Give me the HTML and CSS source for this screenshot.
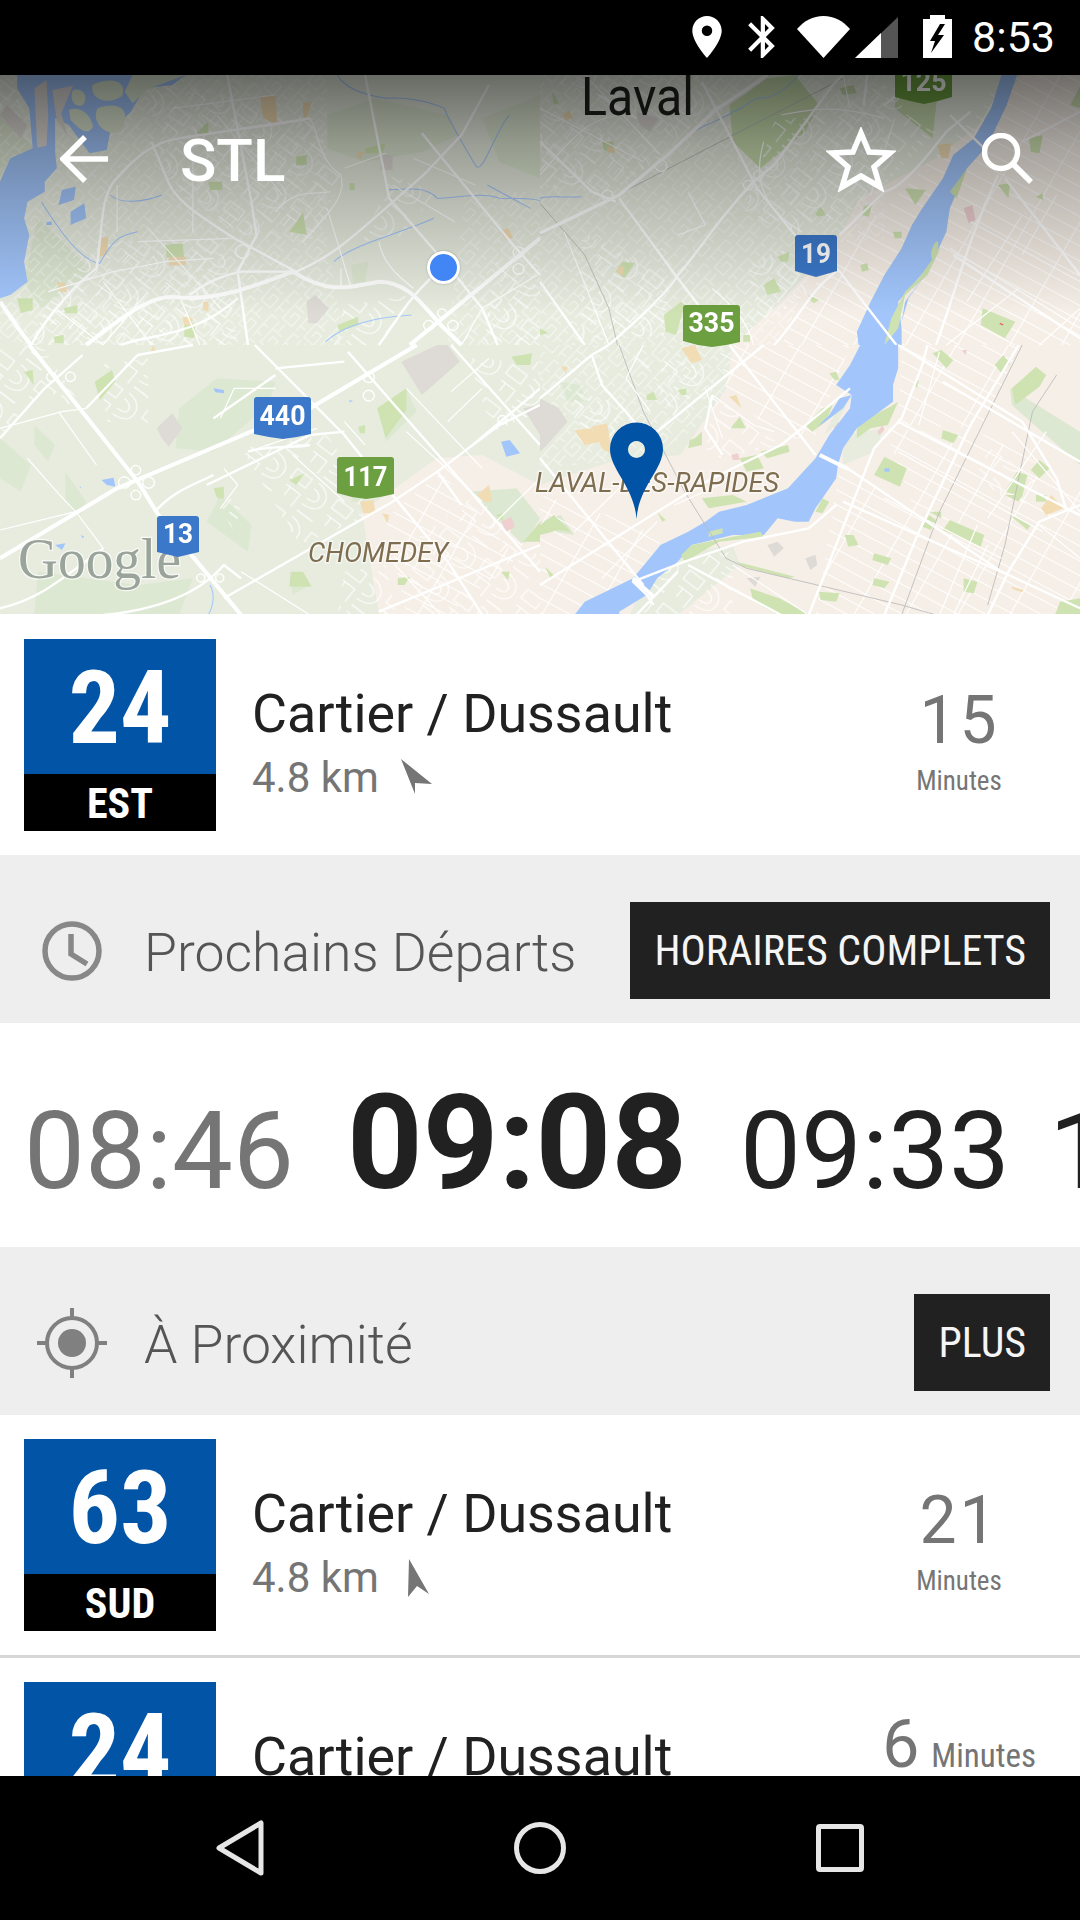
FILE: index.html
```html
<!DOCTYPE html>
<html lang="fr">
<head>
<meta charset="utf-8">
<title>STL</title>
<link rel="stylesheet" href="styles.css">
</head>
<body>
<div class="screen">
  <header class="status">
    <svg class="st-pin" viewBox="5 2 14 20"><path class="w" fill-rule="evenodd" d="M12 2C8.13 2 5 5.13 5 9c0 5.25 7 13 7 13s7-7.75 7-13c0-3.87-3.13-7-7-7zm0 9.5a2.5 2.5 0 0 1 0-5 2.5 2.5 0 0 1 0 5z"/></svg>
    <svg class="st-bt" viewBox="5 2 12.71 20"><path class="w" d="M17.71 7.71L12 2h-1v7.59L6.41 5 5 6.41 10.59 12 5 17.59 6.41 19 11 14.41V22h1l5.71-5.71-4.3-4.29 4.3-4.29zM13 5.83l1.88 1.88L13 9.59V5.83zm1.88 10.46L13 18.17v-3.76l1.88 1.88z"/></svg>
    <svg class="st-wifi" viewBox="0 0 53 42"><path class="w" d="M0 13C7 5 16 0 26.500 0S46 5 53 13L26.500 42Z"/></svg>
    <svg class="st-sig" viewBox="0 0 43 41"><path class="dim" d="M0 41L43 0V41Z"/><path class="w" d="M0 41L26 16V41Z"/></svg>
    <svg class="st-bat" viewBox="0 0 29 43"><path class="w" d="M7 0H22V4H29V43H0V4H7Z"/><path class="k" d="M17 9L7 26H12L8 38L21 20H15L22 9Z"/></svg>
    <span class="clock">8:53</span>
  </header>

  <section class="map">
    <svg class="map-art" viewBox="0 0 1080 539" preserveAspectRatio="none">
      <defs>
        <pattern id="grid" width="132" height="39" patternUnits="userSpaceOnUse" patternTransform="rotate(29)">
          <path class="pat" d="M0 1.500H132M1.500 0V39"/>
        </pattern>
        <pattern id="sub" width="150" height="126" patternUnits="userSpaceOnUse" patternTransform="rotate(38)">
          <path class="pat" d="M9 12H63V45H9ZM84 9C114 9 135 27 135 51S114 87 84 87M84 30C99 30 114 39 114 51S99 66 84 66M12 69H63V114M27 69V99M84 111H141"/>
        </pattern>
        <pattern id="sub2" width="96" height="84" patternUnits="userSpaceOnUse" patternTransform="rotate(-48)">
          <path class="pat" d="M6 6H90M6 6V42H42V22H22M60 6V42M60 24H90M6 60H90V80M24 60V80M54 60V76"/>
        </pattern>
      </defs>
      <g class="map-layer">
        <rect class="land" width="1080" height="539"/>
        <path class="pink" d="M379 540L362 437 437 383 482 380 540 410 610 387 680 380 705 345 733 270 781 227 836 167 860 123 936 83 988 43 1022 0H1080V539Z"/>

        <!-- quadrant NW -->
        <g transform="scale(.3444 .3333)">
          <path class="wood" d="M950 120L1090 70 1300 120 1330 180 1230 230 1060 260 950 220ZM1400 130L1568 60V310L1450 260ZM0 120L100 220 30 250 0 300ZM110 430L270 590 120 700 70 620ZM1020 570L1070 560 1060 620 1025 625Z"/>
          <path class="tex" fill="url(#sub2)" d="M0 0H950V500L1000 810H0ZM1350 350H1568V810H1300Z"/>
          <path fill="url(#sub)" d="M0 0H50L60 100 0 130ZM420 40L540 30 900 130 1000 300 900 500 700 480 490 330ZM300 500L650 490 690 810 90 810 150 650ZM1000 690L1200 660 1100 810 970 810ZM1440 560L1568 640V810L1400 810ZM1140 300L1260 350 1180 480 1050 500Z"/>
          <path class="park" d="M480 510L530 505 535 550 485 548ZM855 450L880 410 890 480 840 470ZM570 175L605 140 605 180ZM605 320L645 320 645 345 610 345ZM860 245L890 240 890 270 860 270ZM980 750L1040 725 1040 750 985 770ZM535 750L565 745 565 790 535 785ZM50 670L95 670 95 705 60 715ZM185 700L225 690 225 715 190 715ZM155 785L185 780 185 805 160 805ZM1060 220L1120 205 1110 235 1060 235ZM1015 325L1030 325 1030 345 1015 345Z"/>
          <path class="sand" d="M755 65L800 60 805 150 765 130ZM880 85L905 80 890 130 880 120ZM290 490L315 485 310 540 290 545ZM490 545L540 545 540 570 490 572ZM165 620L190 625 195 650 175 650ZM1452 470L1475 458 1490 490 1470 495ZM590 680L605 680 605 710 590 705ZM530 725L560 728 555 750 535 750ZM1040 230L1055 230 1050 250 1035 250Z"/>
          <path class="rock" d="M890 680L915 660 955 700 920 745 895 745ZM1105 240L1140 240 1140 285 1105 285ZM0 120L60 190 80 150 20 90ZM0 420L25 470 0 490ZM0 550L25 590 0 610Z"/>
          <path class="water" d="M50 0H540L500 30 420 40 380 110 320 170 310 225 260 235 200 150 160 130 160 230 165 280 130 320 130 350 80 380 70 430 85 480 70 560 80 620 30 660 0 670V320L30 250 95 220 85 100 50 40Z"/>
          <path class="rock" d="M100 40L135 15 140 120 135 212 108 218ZM152 45L212 32 178 115 195 180 165 135Z"/>
          <path class="wood" d="M212 45C245 35 258 70 240 90 215 100 200 70 212 45ZM268 30C320 5 370 15 355 62 320 90 262 80 268 30ZM283 100C350 75 385 110 350 168 315 190 262 145 283 100ZM200 105C228 92 262 112 270 155 252 188 225 155 205 135ZM385 0H540L430 42 385 85 362 50Z"/>
          <path class="water" d="M180 345L220 335 215 375 170 390ZM205 410L245 385 250 430 205 450ZM135 440H150V450H135ZM40 520L60 515 45 560 35 570Z"/>
          <path class="brook" d="M980 0C1000 40 1060 60 1120 70 1180 65 1250 80 1290 100 1300 130 1340 200 1380 270 1400 310 1440 160 1480 120M1125 345C1190 340 1240 335 1270 370 1320 370 1400 350 1450 370 1500 370 1568 370 1568 380M970 560C1020 510 1150 480 1260 430M320 360C350 390 420 380 470 360M945 800C980 770 1040 730 1195 720M1415 330L1540 400M120 380C150 430 230 560 290 565 330 490 350 480 400 470"/>
          <path class="road thin" d="M500 100L800 60M520 190C600 170 780 160 900 130 930 180 920 250 990 300 1000 350 990 380 880 500M630 120L820 360M340 330V470M560 230V470M950 400L1020 640M1000 280L1120 235M400 500L680 490M140 650L330 590 480 560 620 550M300 620L440 810M160 700L300 810M430 460L640 700M430 650L300 810M520 660L580 810M1100 500C1110 560 1150 600 1200 640M1560 600L1400 700 1340 810M990 580V640M800 410C860 340 900 360 960 350M1140 330L1320 440M1200 250L1380 330"/>
          <path class="road" d="M90 810C150 700 230 620 280 580 300 450 290 380 330 320 380 260 440 200 520 190L900 130M440 200L480 300C500 370 560 410 680 490L860 590M660 0L730 380 745 480 690 590 720 810M1060 0L1130 370 1290 560 1400 700 1445 810M1225 175L1490 510 1568 600M860 590C950 550 1000 510 1130 390L1230 300 1340 180 1420 30M550 660C600 620 650 600 700 590L860 590M350 810C420 780 560 790 690 670M1100 810C1150 740 1180 680 1250 610"/>
          <path class="road wide" d="M250 810C350 730 430 665 500 665 600 680 700 650 850 590 950 655 1000 640 1100 620 1180 620 1220 680 1280 750L1340 810M0 680L60 770 90 810M1568 490L1190 810"/>
          <path class="ring" d="M690 515A20 20 0 1 1 689 516M1235 740A15 15 0 1 1 1234 741M1305 740A15 15 0 1 1 1304 741M1275 705A13 13 0 1 1 1274 706M1495 520A16 16 0 1 1 1494 521M1495 570A16 16 0 1 1 1494 571"/>
        </g>

        <!-- quadrant NE -->
        <g transform="translate(540 0) scale(.3444 .3333)">
          <path class="tex" fill="url(#sub2)" d="M0 0H1000V500H820L700 810H0Z"/>
          <path class="park-dark" d="M550 90L660 10 740 0 810 90 770 170 640 280 560 200ZM1040 0H1160L1140 190 1030 100ZM870 40L910 30 920 55 880 60Z"/>
          <path fill="url(#sub)" d="M0 100L350 250 200 350 0 340ZM680 140L1000 80 1150 170 950 380 760 480 590 420ZM120 470L380 600 360 780 120 800ZM600 560L720 520 780 650 640 760ZM860 60L1030 30 1060 120 900 140ZM0 0H470L550 90 420 200 280 130Z"/>
          <path fill="url(#grid)" d="M700 810L860 520 1000 400 1130 260 1280 110 1340 0H1568V810ZM1000 700L1060 640 1050 810Z"/>
          <path class="park" d="M360 720L410 680 420 690 395 780 365 770ZM690 545L725 530 720 560 700 560ZM650 630L680 610 700 650 660 660ZM930 570L950 565 955 585 935 590ZM800 415L815 395 830 420 805 425ZM940 395L965 385 955 425 935 420ZM1285 700L1380 740 1350 790 1280 750ZM1420 190L1460 180 1450 235 1425 230ZM1330 330L1365 325 1360 370ZM1440 365L1460 355 1460 375ZM590 780H610V800H590ZM1025 470H1050V490L1030 490ZM1570 30L1540 90 1568 100ZM780 660L810 675 795 685 785 675ZM240 560L275 565 245 610 220 590ZM180 200L215 200 210 230 185 225ZM35 50L55 85 40 90ZM1060 340L1120 345 1090 390ZM0 760L25 775 0 780Z"/>
          <path class="sand" d="M65 120L85 105 95 130 75 135ZM195 210L220 225 215 235 195 230ZM1155 210L1195 205 1185 250 1165 250ZM225 575L245 575 240 600 225 595Z"/>
          <path class="rose" d="M1230 400L1255 390 1265 435 1245 445Z"/>
          <path class="rock" d="M280 110L345 130 320 170 290 150Z"/>
          <path class="water" d="M1385 0L1355 90 1300 210 1240 280 1190 400 1180 470 1140 560 1090 620 1040 680 1050 760 1050 810H925L920 770 960 680 1000 600 1050 520 1080 450 1110 400 1170 310 1200 240 1260 190 1310 100 1340 0Z"/>
          <path class="bank" d="M1165 515L1125 600 1060 660 1040 760 1000 810 1020 730 1060 650 1100 610ZM1240 280L1190 350 1210 370ZM1150 500C1160 490 1160 530 1140 555 1130 540 1140 510 1150 500Z"/>
          <path class="water" d="M1125 590L1060 680 1050 740 1070 670Z"/>
          <path class="brook" d="M430 180C470 150 540 130 560 110 600 100 620 60 650 70 690 60 720 40 750 0M0 370C40 360 80 370 120 365"/>
          <path class="rail" d="M0 385L130 540 200 700 225 810M0 480L880 10"/>
          <path class="road thin" d="M0 100L300 260M130 0L350 240M0 300C100 180 150 120 250 120M650 200C620 300 640 400 760 470M700 120C800 100 860 90 1000 130M900 100L880 0M1030 130L960 360M430 350L480 450 400 480M70 470L200 810M500 640C520 660 600 720 620 810M1190 520L1568 760M1390 640L1180 810M1568 700L1450 810M1250 440L1568 620M1400 420L1240 680M1500 360L1400 540"/>
          <path class="road" d="M470 20L630 340 740 480 870 590 1035 810M230 370L400 610 460 690M0 620L130 810M200 810C300 720 380 640 400 600 440 560 510 440 620 320L680 270 850 30 880 0M680 810C760 720 780 650 860 590M870 480L1000 350C1050 340 1120 250 1180 170L1250 110M1150 810C1210 640 1240 500 1330 300M1190 120L1290 220M1350 310L1568 600M1200 540L1568 790M1568 110L1400 200M0 200L150 350 220 380M950 0L940 90M1000 90L1110 0M280 130L170 60"/>
          <path class="road wide-2" d="M0 475L230 360 370 240 510 105 660 0"/>
          <path class="ring" d="M340 260A17 17 0 1 1 339 261M185 350A16 16 0 1 1 184 351M625 290A14 14 0 1 1 624 291M595 320A14 14 0 1 1 594 321"/>
          <path class="pink-fine" d="M1335 745L1345 750"/>
        </g>

        <!-- quadrant SW -->
        <g transform="translate(0 270) scale(.3444 .3333)">
          <path class="wood" d="M0 280L90 360 60 440 0 400ZM520 190L630 100 800 110 780 180 620 320 510 310ZM1100 190L1180 130 1210 200 1120 290ZM190 380L250 470 230 520 190 470ZM100 240L160 300 140 350 100 300ZM640 450L730 540 720 620 600 530ZM110 680L400 720 560 700 520 810H100ZM840 680L900 720 850 750ZM1360 440L1500 430 1568 520 1520 600 1420 500ZM1030 420L1060 470 1020 470Z"/>
          <path fill="url(#sub)" d="M0 0H120L260 220 130 130 0 280ZM290 60L430 40 430 240 310 230ZM700 310L950 270 1100 500 870 600ZM600 420L700 480 680 560ZM1000 680L1120 660 1150 810H980ZM1160 620L1380 450 1568 640V810H1240ZM1360 40L1568 50 1568 200 1430 260Z"/>
          <path fill="url(#grid)" d="M1120 520L1280 380 1500 640 1300 810H1180Z"/>
          <path class="park" d="M275 110L325 75 335 110 290 165ZM70 80L95 75 98 120ZM840 405L885 385 860 420ZM620 430L650 425 650 460 630 460ZM1040 245L1060 240 1060 265 1045 265ZM1095 190L1180 130 1180 195 1120 280ZM1485 35L1545 25 1540 60 1500 60ZM845 680L880 680 905 725 840 725ZM1155 700L1190 695 1175 720 1155 720ZM1520 590L1568 530V590ZM1455 680L1480 680 1475 705ZM1440 510L1460 505 1460 530Z"/>
          <path class="sand" d="M1385 450L1420 420 1430 470 1405 470ZM1045 470L1085 465 1090 505 1055 505ZM1110 505L1130 510 1125 535ZM445 0L455 25 435 25Z"/>
          <path class="rose" d="M1455 530L1485 515 1495 545 1470 560Z"/>
          <path class="rock" d="M455 250L500 205 530 250 490 305 470 280ZM1165 50L1270 0H1300L1335 50 1225 150ZM1520 190L1568 180V270Z"/>
          <path class="water" d="M620 130L650 135 650 145 625 142ZM1455 290L1480 285 1510 325 1470 335ZM295 405L330 398 335 425 310 420ZM235 570L245 575 240 580ZM160 600L190 595 180 615ZM1015 165L1025 168 1015 172ZM230 425L235 425 235 430Z"/>
          <path class="brook" d="M610 720C625 750 620 780 605 810"/>
          <path class="road thin" d="M80 340C130 400 190 470 220 500L300 610M220 500L0 555M170 200L280 360M640 220L680 130H800M1000 230L1060 300M0 250L180 200 250 190M1180 260L1400 470M720 320L920 250M850 330L1000 470M650 370L690 420 640 490M1420 550L1568 400M1180 130L1400 370M1420 40L1310 140M1130 640L1280 810M700 680L900 810M1300 230L1400 130"/>
          <path class="road" d="M740 0L1000 270 1100 400 1300 650 1400 810M1010 20L1400 480 1568 680M1310 0L1568 300M0 280L130 130 240 30M250 190L400 30 560 0M650 760L1140 470 1270 380 1450 240 1568 180M300 810C500 790 600 720 650 660L700 700M1568 600L1100 800M620 220L800 90M600 420L900 270 1000 260M800 70L1000 50M450 500C500 440 560 420 620 390M720 320C780 300 850 310 900 300M0 790C120 760 180 700 300 610M1360 310L1500 190 1568 130M1270 380L1340 480"/>
          <path class="road wide" d="M85 0L400 410 460 510 700 810M0 640L340 430 740 255M900 190L1210 0"/>
          <path class="ring" d="M350 400A17 17 0 1 1 349 401M420 400A17 17 0 1 1 419 401M385 365A14 14 0 1 1 384 366M385 440A14 14 0 1 1 384 441M140 85A14 14 0 1 1 139 86M195 85A14 14 0 1 1 194 86M1060 85A16 16 0 1 1 1059 86M1060 140A16 16 0 1 1 1059 141M630 690A12 12 0 1 1 629 691M575 690A12 12 0 1 1 574 691M1450 215A13 13 0 1 1 1449 216"/>
        </g>

        <!-- quadrant SE -->
        <g transform="translate(540 270) scale(.3444 .3333)">
          <path class="land" d="M0 0H560L540 130 480 230 350 320 200 350 0 370ZM340 640L560 600 580 660 400 810H260ZM880 270L1000 250 970 320 880 360Z"/>
          <path class="wood" d="M60 110L115 120 140 170 80 170ZM1365 130L1568 260V360L1370 180ZM0 530L60 510 100 570 40 560 0 570Z"/>
          <path class="tex" fill="url(#sub2)" d="M0 0H560L540 130 480 230 350 320 200 350 0 370Z"/>
          <path fill="url(#sub)" d="M270 30L500 60 400 230 340 120ZM500 150L700 300 480 350ZM340 650L560 620 560 810 300 810ZM100 140L250 180 200 300 100 280ZM1290 300L1440 400 1400 500 1270 400Z"/>
          <path fill="url(#grid)" d="M520 0H900L860 110 800 270 700 290 540 130ZM870 370L1568 760V810H800ZM1050 0H1400L1280 250 1040 240ZM0 450L260 530 350 590 290 690 200 760 100 810H0ZM1000 250L1300 270 1568 430V810H1200Z"/>
          <path class="park" d="M310 150L330 140 340 165 310 165ZM400 135L425 130 425 150 410 150ZM450 280L470 260 470 300 430 310 435 285ZM560 240L580 215 598 250 555 250ZM840 85L860 80 870 105 855 105ZM1140 25L1165 15 1200 45 1180 70ZM1320 60L1345 30 1365 55 1340 85ZM1085 115L1100 105 1095 130ZM1170 255L1215 270 1200 295 1165 280ZM970 390L1000 335 1065 370 1045 425ZM1350 440L1385 380 1415 390 1400 455ZM1425 375L1450 345 1480 370 1450 400ZM1370 130L1440 65 1470 90 1450 125 1380 180ZM1170 555L1190 525 1290 570 1280 605ZM1370 515L1380 515 1425 540 1415 555ZM1110 545L1130 510 1150 525 1135 555ZM1130 500L1165 500 1165 520ZM885 570L910 570 925 600 895 605ZM970 625L1020 640 1010 660 965 645ZM970 700L1015 710 1000 730 965 720ZM1230 700L1270 710 1260 745 1230 740ZM820 460L840 470 820 505 800 500ZM610 730L695 760 785 810H690L620 770ZM810 740L870 745 860 770 815 765ZM1510 770L1568 760V810H1495ZM15 665L40 690 30 700ZM340 500L365 525 355 530ZM1350 450H1400L1390 470ZM570 650L740 695 720 700 590 665ZM470 460L560 450 600 470 490 490ZM770 240L820 190 850 180 830 230 790 260ZM640 320L720 300 725 320 660 340ZM580 340L630 330 650 370 600 380ZM0 540L40 510 90 560 50 555 0 570Z"/>
          <path class="bank" d="M920 250C950 210 1000 200 1040 170L1010 240 960 250 920 280ZM1440 450H1470V470H1440Z"/>
          <path class="sand" d="M410 10L450 0 470 45 440 55ZM100 255L150 250 175 290 130 300ZM150 245L195 235 210 330 180 310ZM550 155L570 150 585 190ZM60 65L80 65 75 85ZM1455 490L1485 450 1520 490 1470 510ZM1370 725L1405 735 1400 742 1372 732Z"/>
          <path class="rose" d="M555 330L575 325 580 345 560 345ZM845 225L870 235 855 250ZM980 260L995 240 1000 255 985 270ZM1225 15L1240 15 1235 30Z"/>
          <path class="rock" d="M0 160L55 190 80 230 20 300 0 320ZM660 600L690 590 708 610 680 635ZM770 640L800 630 805 660 785 675ZM600 700L640 695 625 725Z"/>
          <path class="water" d="M1040 0L1040 70 1025 120 1025 170 960 220 920 250 880 310 865 360 860 400 800 490 780 530 740 530 690 520 650 570 560 570 480 590 440 600 400 650 340 700 310 750 230 800 230 810H100L130 770 230 720 270 700 310 650 350 600 430 560 480 530 520 500 600 480 720 430 800 340 840 270 900 190 905 150 860 120 900 60 930 0Z"/>
          <path class="land" d="M905 150L860 240 825 270 860 200Z"/>
          <path class="bank" d="M490 560L530 550 530 565 490 575ZM440 600L560 575 640 560 650 575 520 590 420 650 410 630Z"/>
          <path class="water" d="M905 150L880 190 835 225 805 245 840 210 870 160Z"/>
          <path class="water" d="M1000 370L1015 370 1015 380 1000 380Z"/>
          <path class="rail" d="M230 0L300 200 420 440 540 640 600 670 1050 780 1150 810M1400 0L1280 250 1160 500 1050 810M1500 90L1430 200 1350 600 1300 780"/>
          <path class="road thin" d="M300 0L250 100 320 200M480 130L530 280M500 150L620 240 680 260M100 560L260 400M180 700L340 530M390 480L520 420M1160 20L1100 240M1470 260L1300 520M1270 540L1160 810M1370 260L1568 500M1040 320L1460 560M1000 460L1340 640M1200 810L1300 600M1450 540L1568 640M560 660L780 810"/>
          <path class="road" d="M0 160L150 30 200 0M150 30L180 120 300 260 350 320M340 260L650 0M550 0L800 330M815 330L900 375M900 375L1340 680 1568 790M420 650L270 710 310 750 330 780M0 720L340 500 500 400 700 300 760 250 900 130M780 810L970 310 1050 220 1110 60 1125 0M1000 810L1100 560 1250 240 1390 0M1040 0L1400 230 1500 400 1530 500M1300 810L1360 680 1450 530 1568 480M1040 230L1568 510M0 340L300 720M500 150L480 250 530 330M420 650L590 590 780 550 860 480M880 470L1360 690M1170 110L1568 350M280 810L400 680M430 660L700 810"/>
          <path class="road wide" d="M812 330L895 372M270 700L330 755"/>
        </g>

        <!-- labels and road signs -->
        <text class="lbl-city" x="581" y="40" textLength="113" lengthAdjust="spacingAndGlyphs">Laval</text>
        <text class="lbl-area" x="535" y="417" textLength="244" lengthAdjust="spacingAndGlyphs">LAVAL-DES-RAPIDES</text>
        <text class="lbl-area" x="308" y="487" textLength="140" lengthAdjust="spacingAndGlyphs">CHOMEDEY</text>
        <text class="lbl-logo" x="18" y="503" textLength="163" lengthAdjust="spacingAndGlyphs">Google</text>

        <g class="sign-blue">
          <path d="M254 325a3 3 0 0 1 3-3h51a3 3 0 0 1 3 3v34l-14 3-14 2-14-2-15-3Z"/>
          <path d="M157 444a3 3 0 0 1 3-3h36a3 3 0 0 1 3 3v33l-21 5-21-5Z"/>
          <path d="M795 163a3 3 0 0 1 3-3h36a3 3 0 0 1 3 3v33l-21 6-21-6Z"/>
        </g>
        <g class="sign-green">
          <path d="M337 385a3 3 0 0 1 3-3h51a3 3 0 0 1 3 3v34l-14 3-14 2-14-2-15-4Z"/>
          <path d="M683 233a3 3 0 0 1 3-3h51a3 3 0 0 1 3 3v34l-14 3-14 2-14-2-15-4Z"/>
          <path d="M895 0h57v22l-14 4-14 3-14-3-15-4Z"/>
        </g>
        <text class="sign" x="282.500" y="350" textLength="46" lengthAdjust="spacingAndGlyphs">440</text>
        <text class="sign" x="365.500" y="411" textLength="44" lengthAdjust="spacingAndGlyphs">117</text>
        <text class="sign" x="178" y="468" textLength="30" lengthAdjust="spacingAndGlyphs">13</text>
        <text class="sign" x="816" y="188" textLength="30" lengthAdjust="spacingAndGlyphs">19</text>
        <text class="sign" x="711.500" y="257" textLength="46" lengthAdjust="spacingAndGlyphs">335</text>
        <text class="sign" x="923.500" y="16" textLength="46" lengthAdjust="spacingAndGlyphs">125</text>
      </g>
      <path class="map-pin" fill-rule="evenodd" d="M636.500 444C634 411 610 395 610 374a26.500 26.500 0 0 1 53 0C663 395 639 411 636.500 444ZM636.500 366a8.500 8.500 0 1 0 .01 0Z"/>
    </svg>
    <div class="map-shade"></div>
    <div class="user-dot"></div>
    <div class="toolbar">
      <svg class="tb-back" viewBox="0 0 48 48"><path class="tb-line" d="M48 24H4M25 2L3 24 25 46"/></svg>
      <span class="tb-title">STL</span>
      <svg class="tb-star" viewBox="0 0 70 65"><path class="tb-line" d="M35 6L43 25 64 26 48 40 54 60 35 49 16 60 22 40 6 26 27 25Z"/></svg>
      <svg class="tb-search" viewBox="0 0 51 51"><circle class="tb-line" cx="19" cy="19" r="16.500"/><path class="tb-line" d="M31 31L49 49"/></svg>
    </div>
  </section>

  <main class="content">
    <article class="stop">
      <div class="badge"><div class="badge-num">24</div><div class="badge-dir">EST</div></div>
      <div class="stop-info">
        <div class="stop-name">Cartier / Dussault</div>
        <div class="stop-dist">4.8 km
          <svg class="arrow" viewBox="0 0 40 40"><path class="arrow-fill" d="M4 0L35 25 18 24 18 35Z"/></svg>
        </div>
      </div>
      <div class="eta"><div class="eta-num">15</div><div class="eta-unit">Minutes</div></div>
    </article>

    <div class="band">
      <svg class="band-icon" viewBox="0 0 60 60"><circle class="ic-line" cx="30" cy="30" r="27"/><path class="ic-line" d="M29 13V33L45 43"/></svg>
      <h2 class="band-title">Prochains Départs</h2>
      <span class="band-btn">HORAIRES COMPLETS</span>
    </div>

    <div class="times">
      <span class="time past">08:46</span>
      <span class="time next">09:08</span>
      <span class="time">09:33</span>
      <span class="time upcoming">10:02</span>
    </div>

    <div class="band">
      <svg class="band-icon target" viewBox="0 0 70 70"><circle class="ic-line thin-ic" cx="35" cy="35" r="25"/><circle class="ic-fill" cx="35" cy="35" r="14"/><path class="ic-line thin-ic" d="M35 0V12M35 58V70M0 35H12M58 35H70"/></svg>
      <h2 class="band-title">À Proximité</h2>
      <span class="band-btn">PLUS</span>
    </div>

    <article class="stop divided">
      <div class="badge"><div class="badge-num">63</div><div class="badge-dir">SUD</div></div>
      <div class="stop-info">
        <div class="stop-name">Cartier / Dussault</div>
        <div class="stop-dist">4.8 km
          <svg class="arrow" viewBox="0 0 40 40"><path class="arrow-fill" d="M12 0L32 35 20 27 11 38Z"/></svg>
        </div>
      </div>
      <div class="eta"><div class="eta-num">21</div><div class="eta-unit">Minutes</div></div>
    </article>

    <article class="stop flush">
      <div class="badge"><div class="badge-num">24</div><div class="badge-dir">EST</div></div>
      <div class="stop-info">
        <div class="stop-name">Cartier / Dussault</div>
      </div>
      <div class="eta eta-inline"><span class="eta-num">6</span><span class="eta-unit">Minutes</span></div>
    </article>
  </main>

  <nav class="navbar">
    <svg class="nav-back" viewBox="0 0 48 56"><path class="nav-line" d="M45 3V53L3 28Z"/></svg>
    <svg class="nav-home" viewBox="0 0 52 52"><circle class="nav-line" cx="26" cy="26" r="23.500"/></svg>
    <svg class="nav-recent" viewBox="0 0 48 48"><rect class="nav-line" x="2.500" y="2.500" width="43" height="43" rx="1.500"/></svg>
  </nav>
</div>
</body>
</html>
```
FILE: styles.css
```css
* { box-sizing: border-box; }
html, body { margin: 0; padding: 0; }
body { background: #000; font-family: Roboto, "Liberation Sans", sans-serif; }

.screen { width: 1080px; height: 1920px; display: flex; flex-direction: column; overflow: hidden; background: #fff; }

/* status bar */
.status { height: 75px; flex: none; background: #000; display: flex; align-items: flex-start; justify-content: flex-end; padding: 16px 25px 0 0; }
.status .w { fill: #fff; }
.status .dim { fill: #555; }
.status .k { fill: #000; }
.st-pin { width: 30px; height: 42px; }
.st-bt { width: 27px; height: 42px; margin-left: 26px; }
.st-wifi { width: 53px; height: 42px; margin-left: 22px; }
.st-sig { width: 43px; height: 41px; margin: 1px 0 0 5px; }
.st-bat { width: 29px; height: 43px; margin: -1px 0 0 25px; }
.clock { margin-left: 20px; color: #fff; font-size: 43px; line-height: 42px; height: 42px; }

/* map */
.map { height: 539px; flex: none; position: relative; overflow: hidden; }
.map-art { display: block; width: 1080px; height: 539px; }
.map-layer { filter: blur(.4px); }
.land { fill: #e7ecdf; }
.pink { fill: #f6efe7; }
.wood { fill: #dde8d2; }
.park { fill: #cfe3b2; }
.park-dark { fill: #c8dcae; }
.bank { fill: #cfe3b2; }
.sand { fill: #f1dcb4; }
.rose { fill: #efcfd0; }
.rock { fill: #dedad6; }
.water { fill: #a2c6fc; }
.tex { opacity: .6; }
.brook { fill: none; stroke: #a2c6fc; stroke-width: 3; }
.rail { fill: none; stroke: #b9b9b9; stroke-width: 2.500; }
.pat { fill: none; stroke: #fff; stroke-width: 3; }
.road { fill: none; stroke: #fff; stroke-width: 7; stroke-linejoin: round; }
.road.thin { stroke-width: 3.500; }
.road.wide { stroke-width: 12; }
.road.wide-2 { stroke-width: 10; }
.ring { fill: none; stroke: #fff; stroke-width: 4; }
.pink-fine { stroke: #e0606e; stroke-width: 4; }
.lbl-city { font-size: 54px; fill: #1f1f1c; }
.lbl-area { font-size: 28px; font-style: italic; fill: #7f6d50; stroke: rgba(255,255,255,.55); stroke-width: 3px; paint-order: stroke; }
.lbl-logo { font-family: "Liberation Serif", serif; font-size: 56px; fill: #9aa49a; stroke: rgba(255,255,255,.7); stroke-width: 2.500px; paint-order: stroke; }
.sign-blue { fill: #3b78c9; }
.sign-green { fill: #6c9f40; }
.sign { font-size: 27px; font-weight: 700; fill: #fff; text-anchor: middle; }
.map-pin { fill: #0154a5; }
.map-shade { position: absolute; inset: 0; background: linear-gradient(to bottom, rgba(0,0,0,.55) 0, rgba(0,0,0,.33) 70px, rgba(0,0,0,.2) 130px, rgba(0,0,0,.07) 200px, rgba(0,0,0,0) 240px); }
.user-dot { position: absolute; left: 427px; top: 176px; width: 33px; height: 33px; border-radius: 50%; background: #4285f4; border: 3.500px solid #fff; box-shadow: 0 0 2px rgba(0,0,0,.3); }

.toolbar { position: absolute; left: 0; right: 0; top: 0; display: flex; align-items: flex-start; padding: 52px 47px 0 60px; }
.tb-line { fill: none; stroke: #fff; stroke-width: 5.500; }
.tb-back { width: 48px; height: 48px; margin-top: 8px; }
.tb-title { margin-left: 72px; color: #fff; font-size: 60px; font-weight: 500; line-height: 68px; flex: 1; }
.tb-star { width: 70px; height: 65px; }
.tb-search { width: 51px; height: 51px; margin: 6px 0 0 86px; }

/* content */
.content { flex: 1; min-height: 0; overflow: hidden; }

.stop { display: flex; align-items: flex-start; height: 241px; padding: 25px 36px 0 24px; background: #fff; }
.stop.divided { height: 243px; padding-top: 24px; border-bottom: 3px solid #d6d6d6; }
.stop.flush { padding-top: 24px; }
.badge { width: 192px; height: 192px; flex: none; display: flex; flex-direction: column; background: #000; color: #fff; text-align: center; }
.badge-num { height: 135px; background: #0254a6; font-size: 102px; font-weight: 700; line-height: 139px; font-stretch: 75%; }
.badge-dir { flex: 1; font-size: 42px; font-weight: 700; line-height: 59px; font-stretch: 75%; }
.stop-info { margin-left: 36px; padding-top: 45px; flex: 1; }
.stop-name { font-size: 53.800px; line-height: 60px; color: #212121; }
.stop-dist { display: flex; align-items: center; gap: 18px; margin-top: 9px; font-size: 42px; line-height: 50px; color: #757575; }
.arrow { width: 40px; height: 40px; margin-top: 2px; }
.arrow-fill { fill: #757575; }
.eta { width: 170px; padding-top: 44px; text-align: center; color: #757575; }
.eta-num { padding-left: 1px; font-size: 66px; font-weight: 400; line-height: 76px; letter-spacing: 3px; }
.eta-unit { margin-top: 5px; font-size: 27px; line-height: 34px; font-stretch: 75%; }
.eta-inline { display: flex; align-items: baseline; justify-content: flex-end; gap: 12px; width: auto; padding-top: 25px; margin-right: 8px; }
.eta-inline .eta-num { letter-spacing: 0; }
.eta-inline .eta-unit { margin-top: 0; font-size: 33px; }

.band { height: 168px; display: flex; align-items: center; padding: 47px 30px 24px 42px; background: #eee; }
.band-icon { width: 60px; height: 60px; flex: none; }
.band-icon.target { width: 70px; height: 70px; margin: 0 -5px; }
.ic-line { fill: none; stroke: #888; stroke-width: 5.500; }
.thin-ic { stroke-width: 4; stroke: #808080; }
.ic-fill { fill: #808080; }
.band-title { flex: 1; margin: 0 0 0 42px; padding-top: 5px; font-size: 53.500px; font-weight: 300; color: #555; line-height: 60px; }
.band-btn { height: 97px; padding: 0 24px; background: #212121; color: #f5f5f5; font-size: 42px; line-height: 97px; font-stretch: 75%; }

.times { height: 224px; display: flex; align-items: baseline; gap: 53px; padding: 50px 0 0 24px; overflow: hidden; white-space: nowrap; color: #212121; }
.time { font-size: 108.400px; line-height: 140px; flex: none; }
.time.past { color: #757575; }
.time.next { font-size: 132px; font-weight: 700; }
.time.upcoming { margin-left: -14px; }

/* navigation bar */
.navbar { height: 144px; flex: none; background: #000; display: grid; grid-template-columns: repeat(3, 48px); justify-content: center; align-items: center; column-gap: 252px; }
.navbar svg { display: block; }
.nav-line { fill: none; stroke: #e6e6e6; stroke-width: 5; stroke-linejoin: round; }
.nav-back { width: 48px; height: 56px; }
.nav-home { width: 52px; height: 52px; margin-left: -2px; }
.nav-recent { width: 48px; height: 48px; }
```
